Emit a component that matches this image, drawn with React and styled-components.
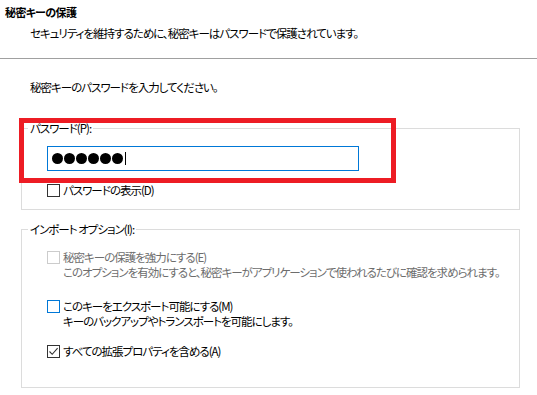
import React from 'react';
import styled, { createGlobalStyle } from 'styled-components';

const GlobalStyle = createGlobalStyle`
  html, body {
    margin: 0;
    padding: 0;
    background: #ffffff;
  }
  body {
    font-family: 'Noto Sans CJK JP', 'Noto Sans', sans-serif;
    font-size: 11.5px;
    line-height: 15px;
    letter-spacing: -1px;
    color: #000000;
    font-feature-settings: 'palt';
    white-space: nowrap;
  }
`;

const Page = styled('div')`
  position: relative;
  width: 537px;
  height: 395px;
  overflow: hidden;
  background: #ffffff;
`;

const Header = styled('div')`
  padding: 5px 0 17px 5px;
  border-bottom: 1px solid #a0a0a0;
`;

const Title = styled('div')`
  font-weight: 700;
  font-size: 11px;
  letter-spacing: -0.6px;
`;

const Subtitle = styled('div')`
  margin: 6px 0 0 25px;
`;

const Body = styled('div')`
  padding: 21px 17px 0 21px;
`;

const Instruction = styled('div')`
  padding-left: 9px;
`;

const GroupBox = styled('fieldset')`
  margin: ${(p) => p.$top}px 0 0 0;
  padding: 0;
  border: 1px solid #dcdcdc;
  min-width: 0;

  legend {
    margin-left: 6px;
    padding: 0 2px;
    line-height: 15px;
    color: #000000;
  }
`;

const GroupContent = styled('div')`
  padding: ${(p) => p.$padTop}px 0 ${(p) => p.$padBottom}px 25px;
`;

const PasswordField = styled('div')`
  width: 312px;
  height: 25px;
  box-sizing: border-box;
  border: 1px solid #0078d7;
  display: flex;
  align-items: center;
  gap: 1px;
  padding-left: 4px;
`;

const Dot = styled('span')`
  width: 11px;
  height: 11px;
  border-radius: 50%;
  background: #000000;
`;

const Caret = styled('span')`
  width: 1px;
  height: 13px;
  margin-left: 1px;
  background: #000000;
`;

const CheckRow = styled('label')`
  display: flex;
  align-items: flex-start;
  gap: 3px;
  margin-top: ${(p) => p.$top || 0}px;
  color: ${(p) => (p.$disabled ? '#6d6d6d' : '#000000')};
`;

const Box = styled('span')`
  flex: none;
  width: 13px;
  height: 13px;
  box-sizing: border-box;
  margin-top: 1px;
  border: 1px solid ${(p) => p.$border};
  background: #ffffff;
  display: flex;
  align-items: center;
  justify-content: center;
`;

const Lines = styled('div')`
  display: flex;
  flex-direction: column;
`;

const Highlight = styled('div')`
  position: absolute;
  left: 19px;
  top: 118px;
  width: 377px;
  height: 65px;
  box-sizing: border-box;
  border: 5px solid #ed1c24;
  pointer-events: none;
`;

const Checkbox = ({ border = '#333333', checked }) => (
  <Box $border={border}>
    {checked && (
      <svg width="11" height="11" viewBox="0 0 11 11">
        <path d="M1.5 5.5 L4.2 8.3 L9.6 2.2" fill="none" stroke="#333333" strokeWidth="1.1" />
      </svg>
    )}
  </Box>
);

const App = () => (
  <Page>
    <GlobalStyle />
    <Header>
      <Title>秘密キーの保護</Title>
      <Subtitle>セキュリティを維持するために、秘密キーはパスワードで保護されています。</Subtitle>
    </Header>
    <Body>
      <Instruction>秘密キーのパスワードを入力してください。</Instruction>
      <GroupBox $top={26}>
        <legend>パスワード(P):</legend>
        <GroupContent $padTop={10} $padBottom={11}>
          <PasswordField>
            {[0, 1, 2, 3, 4, 5].map((i) => <Dot key={i} />)}
            <Caret />
          </PasswordField>
          <CheckRow $top={12}>
            <Checkbox />
            <span>パスワードの表示(D)</span>
          </CheckRow>
        </GroupContent>
      </GroupBox>
      <GroupBox $top={12}>
        <legend>インポート オプション(I):</legend>
        <GroupContent $padTop={13} $padBottom={28}>
          <CheckRow $disabled>
            <Checkbox border="#cccccc" />
            <Lines>
              <span>秘密キーの保護を強力にする(E)</span>
              <span>このオプションを有効にすると、秘密キーがアプリケーションで使われるたびに確認を求められます。</span>
            </Lines>
          </CheckRow>
          <CheckRow $top={19}>
            <Checkbox border="#0078d7" />
            <Lines>
              <span>このキーをエクスポート可能にする(M)</span>
              <span>キーのバックアップやトランスポートを可能にします。</span>
            </Lines>
          </CheckRow>
          <CheckRow $top={15}>
            <Checkbox checked />
            <span>すべての拡張プロパティを含める(A)</span>
          </CheckRow>
        </GroupContent>
      </GroupBox>
    </Body>
    <Highlight />
  </Page>
);

export default App;
